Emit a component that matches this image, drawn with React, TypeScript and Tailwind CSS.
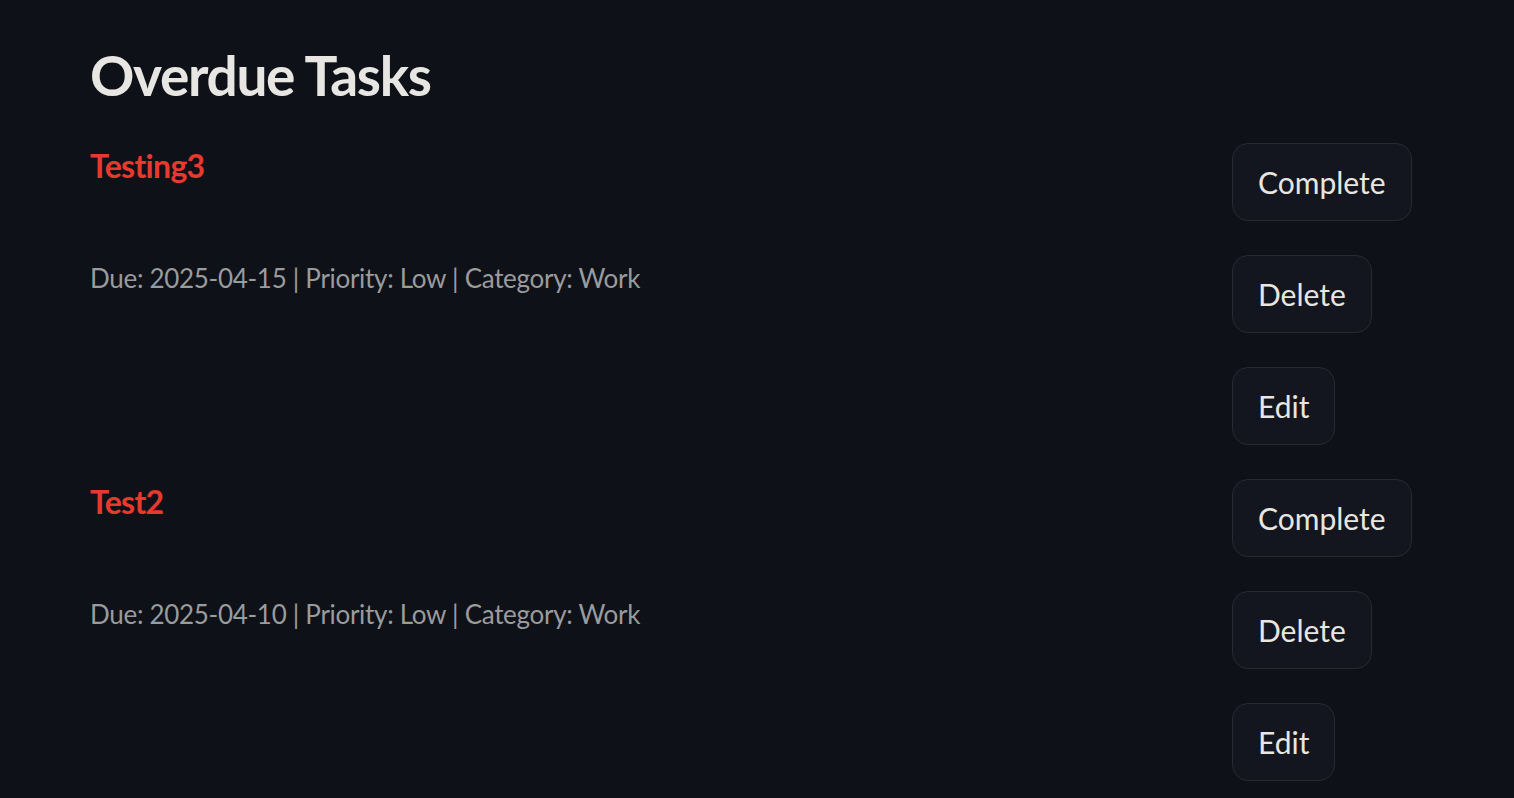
const tasks = [
  { title: "Testing3", due: "2025-04-15", priority: "Low", category: "Work" },
  { title: "Test2", due: "2025-04-10", priority: "Low", category: "Work" },
];

function TaskButton({ label }: { label: string }) {
  return (
    <button className="h-[78px] self-start rounded-[16px] border border-[#262a33] bg-[#13161e] px-[25px] text-[30px] leading-none text-[#e8e6e3]">
      {label}
    </button>
  );
}

export default function App() {
  return (
    <div className="min-h-screen bg-[#0e1117] font-['Lato',sans-serif]">
      <div className="pl-[90px] pr-[100px] pt-[48px]">
        <h1 className="text-[55px] font-bold leading-none tracking-[-1.3px] text-[#e8e6e3]">Overdue Tasks</h1>
        <div className="mt-[40px] flex flex-col gap-[34px]">
          {tasks.map((t) => (
            <div key={t.title} className="flex">
              <div className="flex-1">
                <p className="mt-[7px] text-[32px] font-bold leading-none tracking-[-0.7px] text-[#e8392f]">{t.title}</p>
                <p className="mt-[83px] text-[26px] leading-none tracking-[-0.3px] text-[#9a9b9d]">
                  Due: {t.due} | Priority: {t.priority} | Category: {t.category}
                </p>
              </div>
              <div className="flex w-[182px] flex-col gap-[34px]">
                <TaskButton label="Complete" />
                <TaskButton label="Delete" />
                <TaskButton label="Edit" />
              </div>
            </div>
          ))}
        </div>
      </div>
    </div>
  );
}
